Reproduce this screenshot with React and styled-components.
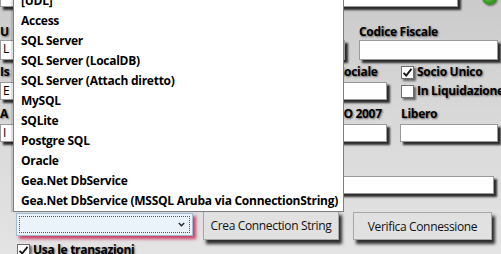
import styled, { createGlobalStyle } from "styled-components";

const FONT = `"Open Sans", "Liberation Sans", sans-serif`;

const GlobalStyle = createGlobalStyle`
    html, body {
        margin : 0;
        padding : 0;
        background : #d6d6d6;
    }
`;

const Window = styled.div`
    position : relative;
    width : 501px;
    height : 254px;
    overflow : hidden;
    background : linear-gradient(180deg, #cbcbcb 0%, #d8d8d8 45%, #e4e4e4 100%);
    font-family : ${FONT};
`;

const Form = styled.div`
    display : flex;
    flex-direction : column;
`;

const Row = styled.div`
    display : flex;
    align-items : center;
    height : ${(p) => p.$h}px;
    margin-top : ${(p) => p.$mt}px;
    padding-left : ${(p) => p.$pl || 0}px;
    flex-shrink : 0;
`;

const Cell = styled.div`
    display : flex;
    align-items : center;
    width : ${(p) => (p.$w ? `${p.$w}px` : "auto")};
    padding-left : ${(p) => p.$pl || 0}px;
    box-sizing : border-box;
    flex-shrink : 0;
    height : 100%;
`;

const Label = styled.span`
    font-size : 12px;
    font-weight : 700;
    letter-spacing : -0.3px;
    line-height : 16px;
    color : #000;
    white-space : nowrap;
    text-shadow : 1px 1px 2px rgba(0, 0, 0, 0.55);
`;

const Field = styled.div`
    width : ${(p) => p.$w}px;
    height : 100%;
    box-sizing : border-box;
    background : #fff;
    border : 1px solid #9a9a9a;
    box-shadow : 3px 3px 2px rgba(0, 0, 0, 0.8);
    font-size : 12px;
    line-height : 16px;
    padding-left : 2px;
    overflow : hidden;
    white-space : nowrap;
    color : #000;
    flex-shrink : 0;
`;

const GreenDot = styled.div`
    width : 15px;
    height : 15px;
    margin-left : 24px;
    border-radius : 50%;
    background : radial-gradient(circle at 40% 35%, #6fd24a, #2e8f1c 70%);
    box-shadow : 1px 1px 2px rgba(0, 0, 0, 0.5);
`;

const CheckWrap = styled.label`
    display : flex;
    align-items : center;
    gap : 3px;
`;

const Box = styled.span`
    width : 13px;
    height : 13px;
    box-sizing : border-box;
    background : #fff;
    border : 1px solid #6f6f6f;
    box-shadow : 2px 2px 2px rgba(0, 0, 0, 0.55);
    display : flex;
    align-items : center;
    justify-content : center;
`;

const Check = ({ checked, children }) => (
    <CheckWrap>
        <Box>
            {checked && (
                <svg width="11" height="11" viewBox="0 0 11 11">
                    <path d="M1.5 5.8 L4.2 8.5 L9.5 1.8" fill="none" stroke="#1a1a1a" strokeWidth="1.9" />
                </svg>
            )}
        </Box>
        <Label>{children}</Label>
    </CheckWrap>
);

const Combo = styled.div`
    width : 177px;
    height : 23px;
    margin-top : 2px;
    align-self : flex-start;
    box-sizing : border-box;
    background : #eaf2fa;
    border : 1px solid #a3bcd6;
    box-shadow : 3px 3px 3px rgba(196, 36, 80, 0.85);
    display : flex;
    align-items : center;
    padding : 2px;
`;

const Focus = styled.div`
    flex : 1;
    height : 100%;
    box-sizing : border-box;
    border : 1px dotted #3a5a84;
    display : flex;
    align-items : center;
    justify-content : flex-end;
    padding-right : 4px;
`;

const Button = styled.div`
    width : ${(p) => p.$w}px;
    height : ${(p) => p.$h}px;
    margin-left : ${(p) => p.$ml}px;
    align-self : flex-${(p) => (p.$top ? "start" : "end")};
    box-sizing : border-box;
    background : #e1e1e1;
    border : 1px solid #a6a6a6;
    box-shadow : 3px 4px 3px rgba(0, 0, 0, 0.8);
    display : flex;
    align-items : center;
    justify-content : center;
    font-size : 12px;
    letter-spacing : -0.35px;
    color : #111;
    white-space : nowrap;
`;

const List = styled.div`
    position : absolute;
    left : 13px;
    top : -9px;
    width : 331px;
    box-sizing : border-box;
    background : #fff;
    border : 1px solid #7f7f7f;
    border-top : none;
    box-shadow : -2px 0 1px rgba(0, 0, 0, 0.12);
`;

const Item = styled.div`
    height : 20px;
    line-height : 20px;
    padding-left : 7px;
    font-size : 12px;
    font-weight : 700;
    letter-spacing : -0.26px;
    color : #000;
    white-space : nowrap;
`;

const providers = [
    "[UDL]",
    "Access",
    "SQL Server",
    "SQL Server (LocalDB)",
    "SQL Server (Attach diretto)",
    "MySQL",
    "SQLite",
    "Postgre SQL",
    "Oracle",
    "Gea.Net DbService",
    "Gea.Net DbService (MSSQL Aruba via ConnectionString)",
];

const App = () => {
    return (
        <>
            <GlobalStyle />
            <Window>
                <Form>
                    <Row $h={20} $mt={-13}>
                        <Cell $w={172}><Field $w={160} /></Cell>
                        <Field $w={286} />
                        <GreenDot />
                    </Row>
                    <Row $h={16} $mt={17}>
                        <Cell $w={172}><Label>U</Label></Cell>
                        <Cell $w={187}><Label>Partita IVA</Label></Cell>
                        <Cell><Label>Codice Fiscale</Label></Cell>
                    </Row>
                    <Row $h={20} $mt={0}>
                        <Cell $w={172}><Field $w={160}>L</Field></Cell>
                        <Cell $w={187}><Field $w={173} /></Cell>
                        <Field $w={139} />
                    </Row>
                    <Row $h={16} $mt={4}>
                        <Cell $w={172}><Label>Is</Label></Cell>
                        <Cell $w={111}><Label>Provincia</Label></Cell>
                        <Cell $w={118} $pl={5}><Label>Capitale Sociale</Label></Cell>
                        <Cell><Check checked>Socio Unico</Check></Cell>
                    </Row>
                    <Row $h={18} $mt={2}>
                        <Cell $w={172}><Field $w={160}>E</Field></Cell>
                        <Cell $w={111}><Field $w={100} /></Cell>
                        <Cell $w={118}><Field $w={104} /></Cell>
                        <Cell><Check>In Liquidazione</Check></Cell>
                    </Row>
                    <Row $h={16} $mt={6}>
                        <Cell $w={172}><Label>A</Label></Cell>
                        <Cell $w={111}><Label>Data</Label></Cell>
                        <Cell $w={118} $pl={32}><Label>ATECO 2007</Label></Cell>
                        <Cell><Label>Libero</Label></Cell>
                    </Row>
                    <Row $h={18} $mt={2}>
                        <Cell $w={172}><Field $w={160}>I</Field></Cell>
                        <Cell $w={111}><Field $w={100} /></Cell>
                        <Cell $w={117}><Field $w={104} /></Cell>
                        <Field $w={98} />
                    </Row>
                    <Row $h={18} $mt={34} $pl={16}>
                        <Field $w={478} />
                    </Row>
                    <Row $h={29} $mt={17} $pl={16}>
                        <Combo>
                            <Focus>
                                <svg width="7" height="5" viewBox="0 0 7 5">
                                    <path d="M0.8 1 L3.5 3.8 L6.2 1" fill="none" stroke="#222" strokeWidth="1.3" />
                                </svg>
                            </Focus>
                        </Combo>
                        <Button $w={136} $h={29} $ml={10} $top>Crea Connection String</Button>
                        <Button $w={139} $h={28} $ml={14}>Verifica Connessione</Button>
                    </Row>
                    <Row $h={14} $mt={3} $pl={17}>
                        <Check checked>Usa le transazioni</Check>
                    </Row>
                </Form>
                <List>
                    {providers.map((p) => (
                        <Item key={p}>{p}</Item>
                    ))}
                </List>
            </Window>
        </>
    );
};

export default App;
